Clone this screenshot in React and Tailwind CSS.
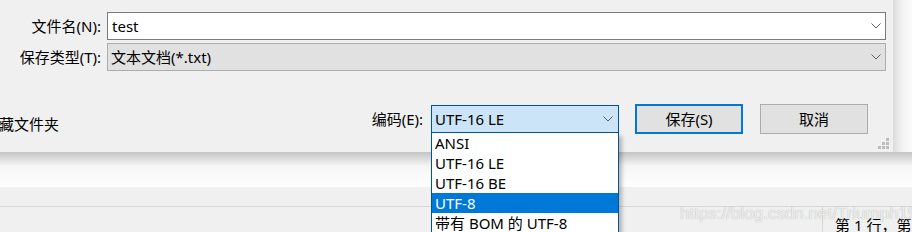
import React from "react";

function Chevron({ className = "" }) {
  return (
    <svg width="10" height="6" viewBox="0 0 10 6" className={className}>
      <polyline points="0.5,0.5 5,5 9.5,0.5" fill="none" stroke="#5f5f5f" strokeWidth="1" />
    </svg>
  );
}

function Grip() {
  const dots = [
    [8, 0],
    [4, 4],
    [8, 4],
    [0, 8],
    [4, 8],
    [8, 8],
  ];
  return (
    <svg width="11" height="11" viewBox="0 0 11 11">
      {dots.map(([x, y], i) => (
        <rect key={i} x={x} y={y} width="3" height="3" fill="#bdbdbd" />
      ))}
    </svg>
  );
}

export default function App() {
  const items = ["ANSI", "UTF-16 LE", "UTF-16 BE", "UTF-8", "带有 BOM 的 UTF-8"];
  return (
    <div className="relative w-[912px] h-[232px] overflow-hidden bg-white font-['Segoe_UI','Noto_Sans','Noto_Sans_CJK_SC',sans-serif] text-[15px] text-black leading-none">
      {/* top: dialog + right shadow */}
      <div className="flex h-[152px]">
        <div className="relative w-[893px] shrink-0 h-full bg-[#f0f0f0] pt-[12px]">
          {/* row 1 */}
          <div className="flex items-center h-[28px]">
            <div className="w-[101px] text-right">文件名(N):</div>
            <div className="ml-[6px] w-[779px] h-full bg-white border border-[#7a7a7a] flex items-center justify-between pl-[4px] pr-[4px]">
              <span>test</span>
              <Chevron />
            </div>
          </div>
          {/* row 2 */}
          <div className="flex items-center h-[28px] mt-[3px]">
            <div className="w-[101px] text-right">保存类型(T):</div>
            <div className="ml-[6px] w-[779px] h-full bg-[#e1e1e1] border border-[#adadad] flex items-center justify-between pl-[3px] pr-[4px]">
              <span>文本文档(*.txt)</span>
              <Chevron />
            </div>
          </div>
          {/* bottom row */}
          <div className="flex items-center h-[30px] mt-[33px]">
            <div className="ml-[-16px] flex-1 pt-[10px] whitespace-nowrap">隐藏文件夹</div>
            <div className="mr-[8px]">编码(E):</div>
            <div className="w-[188px] h-[28px] bg-[#cce4f7] border border-[#005499] flex items-center justify-between pl-[3px] pr-[5px]">
              <span>UTF-16 LE</span>
              <Chevron />
            </div>
            <button className="ml-[16px] w-[108px] h-[30px] bg-[#e1e1e1] border-2 border-[#0078d7] flex items-center justify-center">
              保存(S)
            </button>
            <button className="ml-[17px] w-[108px] h-[30px] bg-[#e1e1e1] border border-[#adadad] flex items-center justify-center">
              取消
            </button>
            <div className="w-[25px]" />
          </div>
          <div className="absolute right-[4px] bottom-[3px] flex">
            <Grip />
          </div>
        </div>
        <div className="flex-1 bg-gradient-to-r from-[#dcdcdc] via-[#f2f2f2] to-[#fbfbfb]" />
      </div>
      {/* shadow below dialog */}
      <div className="h-[35px] bg-gradient-to-b from-[#c4c4c4] via-[#f6f6f6] via-40% to-white" />
      {/* status bar */}
      <div className="h-[20px] bg-[#f0f0f0] border-b border-[#d7d7d7]" />
      <div className="flex h-[25px] bg-[#f0f0f0]">
        <div className="w-[823px] shrink-0 border-r border-[#d7d7d7]" />
        <div className="pl-[12px] pt-[11px] whitespace-nowrap">第 1 行，第</div>
      </div>

      {/* watermark */}
      <div className="absolute left-[680px] top-[205px] whitespace-nowrap font-['Liberation_Sans',sans-serif] text-[17px] text-white/80 [text-shadow:0_0_1px_#9a9a9a]">
        https://blog.csdn.net/Triumph19
      </div>

      {/* dropdown list */}
      <div className="absolute left-[431px] top-[133px] w-[188px] h-[110px] bg-white border-x border-[#005499] shadow-[3px_3px_4px_rgba(0,0,0,0.25)]">
        {items.map((t, i) => (
          <div
            key={t}
            className={
              i === 3
                ? "h-[20px] flex items-center pl-[3px] bg-[#0078d7] text-white"
                : "h-[20px] flex items-center pl-[3px]"
            }
          >
            {t}
          </div>
        ))}
      </div>
    </div>
  );
}
